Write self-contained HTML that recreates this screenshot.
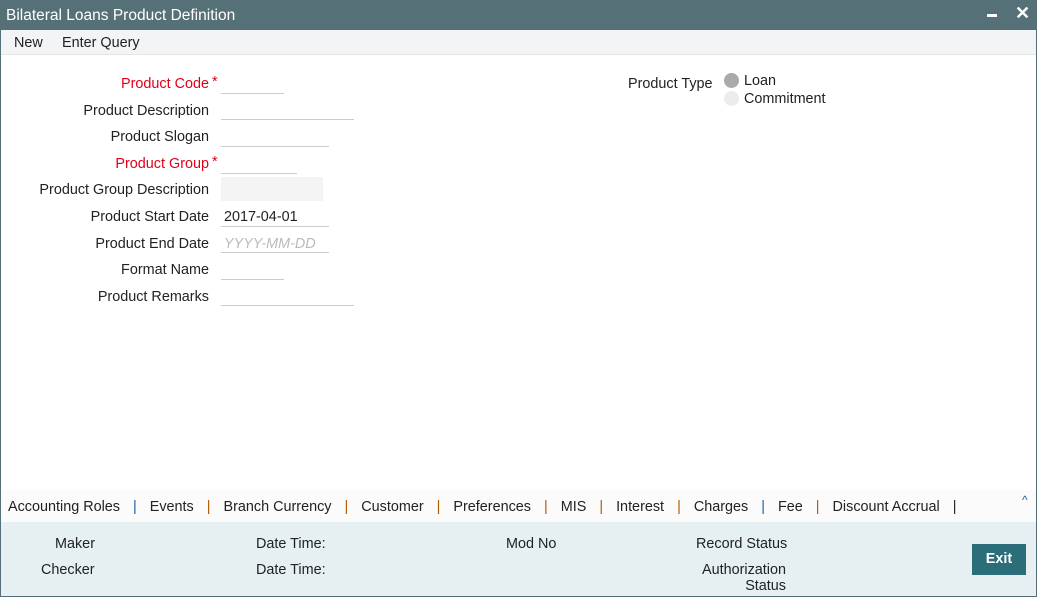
<!DOCTYPE html>
<html><head><style>
*{margin:0;padding:0;box-sizing:border-box}
body{width:1037px;height:597px;font-family:"Liberation Sans",Arial,sans-serif;font-size:14.4px;color:#222;background:#fff;position:relative;overflow:hidden}
.win{position:absolute;left:0;top:0;width:1037px;height:597px;border:1px solid #55707a}
.title{position:absolute;left:0;top:0;width:1037px;height:30px;background:#557177;color:#fff;font-size:15.5px;padding:7px 0 0 6px}
.menu{position:absolute;left:1px;top:30px;width:1035px;height:25px;background:#f3f4f6;border-bottom:1px solid #e2e4e6}
.menu span{position:absolute;top:5px}
.lbl{position:absolute;right:828px;text-align:right;white-space:nowrap;margin-top:1px}
.red{color:#e0001a}
.inp{position:absolute;left:221px;border-bottom:1px solid #ccc;height:20px}
.a{position:absolute;white-space:nowrap;margin-top:1px}
.tabs{position:absolute;left:1px;top:490px;width:1035px;height:32px;background:#fbfbfb}
.foot{position:absolute;left:1px;top:522px;width:1035px;height:74px;background:#e6f0f2}
.sep{color:#1a5d9c;margin:0 13px}
.sep2{color:#b05a00;margin:0 13px}
</style></head><body>
<div class="win"></div>
<div class="title">Bilateral Loans Product Definition
<span style="position:absolute;left:987px;top:14px;width:10px;height:3px;background:#fff"></span>
<span style="position:absolute;left:1015px;top:3px;font-size:18px;font-weight:bold">✕</span></div>
<div class="menu"><span style="left:13px">New</span><span style="left:61px">Enter Query</span></div>

<div class="lbl red" style="top:75px">Product Code</div><div class="a red" style="left:212px;top:73px">*</div>
<div class="inp" style="top:74px;width:63px"></div>
<div class="lbl" style="top:102px">Product Description</div><div class="inp" style="top:100px;width:133px"></div>
<div class="lbl" style="top:128px">Product Slogan</div><div class="inp" style="top:127px;width:108px"></div>
<div class="lbl red" style="top:155px">Product Group</div><div class="a red" style="left:212px;top:153px">*</div>
<div class="inp" style="top:154px;width:76px"></div>
<div class="lbl" style="top:181px">Product Group Description</div><div class="inp" style="top:177px;width:102px;height:24px;background:#f4f4f4;border:none"></div>
<div class="lbl" style="top:208px">Product Start Date</div><div class="inp" style="top:207px;width:108px"></div><div class="a" style="left:224px;top:208px">2017-04-01</div>
<div class="lbl" style="top:235px">Product End Date</div><div class="inp" style="top:233px;width:108px"></div><div class="a" style="left:224px;top:235px;color:#bbb;font-style:italic">YYYY-MM-DD</div>
<div class="lbl" style="top:261px">Format Name</div><div class="inp" style="top:260px;width:63px"></div>
<div class="lbl" style="top:288px">Product Remarks</div><div class="inp" style="top:286px;width:133px"></div>

<div class="a" style="left:628px;top:75px">Product Type</div>
<div class="a" style="left:724px;top:72px;width:15px;height:15px;border-radius:50%;background:#aaa"></div>
<div class="a" style="left:744px;top:72px">Loan</div>
<div class="a" style="left:724px;top:90px;width:15px;height:15px;border-radius:50%;background:#ececec"></div>
<div class="a" style="left:744px;top:90px">Commitment</div>

<div class="tabs"><div class="a" style="left:7px;top:8px">Accounting Roles<span class="sep">|</span>Events<span class="sep2">|</span>Branch Currency<span class="sep2">|</span>Customer<span class="sep2">|</span>Preferences<span class="sep2">|</span>MIS<span class="sep2">|</span>Interest<span class="sep2">|</span>Charges<span class="sep">|</span>Fee<span class="sep2">|</span>Discount Accrual<span class="sep" style="color:#222">|</span></div>
<div class="a" style="left:1021px;top:2px;color:#1a5d9c;font-size:12px">^</div></div>
<div class="foot">
<div class="a" style="left:54px;top:13px">Maker</div>
<div class="a" style="left:40px;top:39px">Checker</div>
<div class="a" style="left:255px;top:13px">Date Time:</div>
<div class="a" style="left:255px;top:39px">Date Time:</div>
<div class="a" style="left:505px;top:13px">Mod No</div>
<div class="a" style="left:695px;top:13px">Record Status</div>
<div class="a" style="left:701px;top:39px;text-align:right;line-height:16px">Authorization<br>Status</div>
<div class="a" style="left:971px;top:22px;width:54px;height:31px;background:#2b6d78;color:#fff;font-weight:bold;text-align:center;line-height:31px;margin-top:0">Exit</div>
</div>
</body></html>
